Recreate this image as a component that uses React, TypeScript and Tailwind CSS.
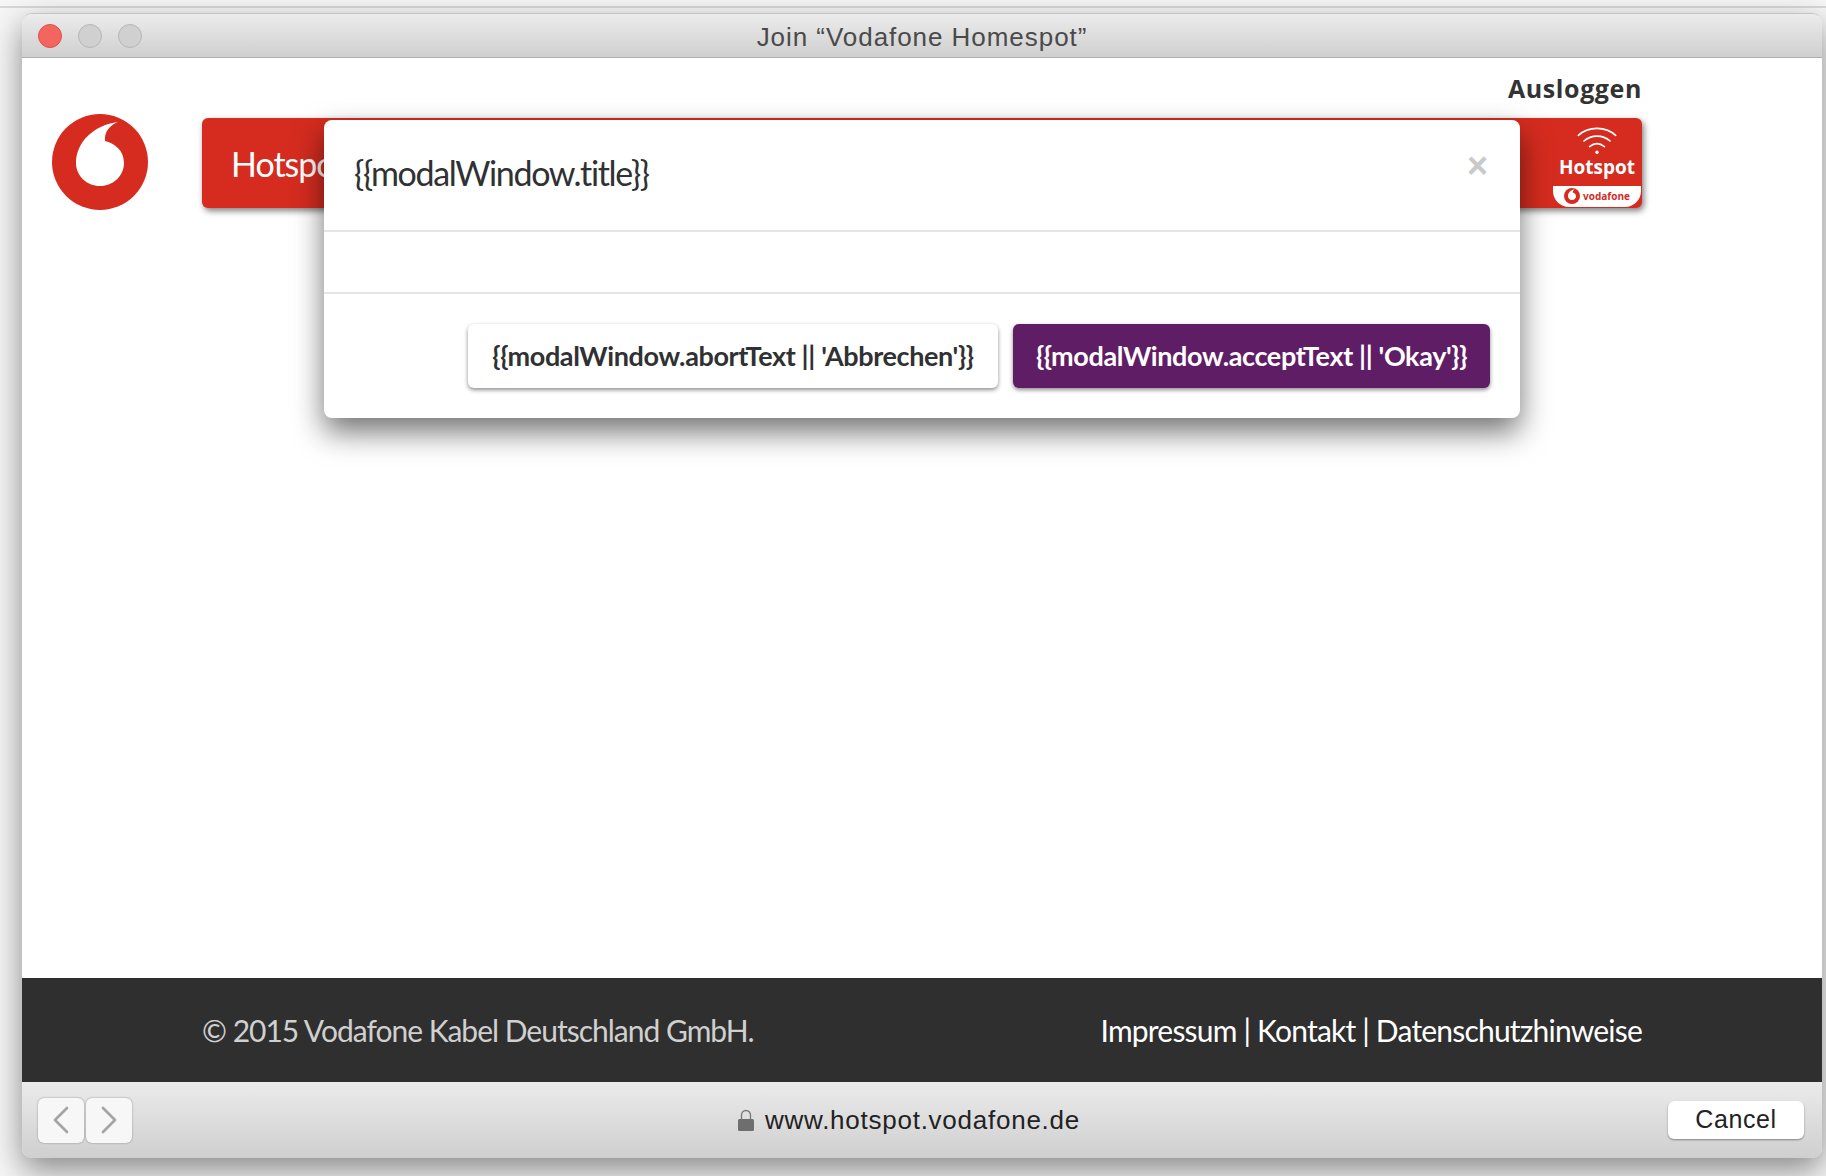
import { ChevronLeft, ChevronRight } from "lucide-react";

function VodafoneMark({ className }: { className?: string }) {
  return (
    <svg viewBox="0 0 96 96" className={className}>
      <circle cx="48" cy="48" r="48" fill="#d52c1f" />
      <path
        d="M66 8C42 11 24 28 24 49C24 62 35 72 48 72C61 72 72 62 72 49C72 36 62 29 53 27C52 18 58 11 66 8Z"
        fill="#fff"
      />
    </svg>
  );
}

function HotspotBadge() {
  return (
    <div className="flex h-full w-[90px] flex-col items-center">
      <svg viewBox="0 0 44 30" className="mt-[9px] h-[28px] w-[42px]" fill="none" stroke="#fff" strokeWidth="1.7" strokeLinecap="round">
        <path d="M2 9C13 -1 31 -1 42 9" />
        <path d="M8 15C16 8 28 8 36 15" />
        <path d="M14 21C19 17 25 17 30 21" />
        <circle cx="22" cy="27" r="1.8" fill="#fff" stroke="none" />
      </svg>
      <span className="text-[19px] leading-[24px] font-bold text-white [font-family:'Open_Sans',sans-serif]">Hotspot</span>
      <div className="mt-[7px] flex h-[21px] w-[88px] items-center justify-center gap-[3px] rounded-b-[16px] bg-white pb-[2px]">
        <VodafoneMark className="h-[16px] w-[16px]" />
        <span className="text-[10px] leading-none font-bold text-[#d52c1f] [font-family:'Open_Sans',sans-serif]">vodafone</span>
      </div>
    </div>
  );
}

function ModalWindow() {
  return (
    <div className="absolute top-[62px] left-[302px] flex h-[298px] w-[1196px] flex-col rounded-[8px] bg-white shadow-[0_14px_30px_rgba(0,0,0,0.55)] [font-family:'Lato',sans-serif]">
      <div className="flex h-[112px] items-start justify-between border-b-2 border-[#e5e5e5] pt-[28px] pr-[32px] pl-[30px]">
        <h4 className="text-[34px] leading-[50px] tracking-[-1.35px] text-[#2f3133]">{"{{modalWindow.title}}"}</h4>
        <span className="text-[36px] leading-[36px] font-bold text-[#c9c9c9] [font-family:'Liberation_Sans',sans-serif]">×</span>
      </div>
      <div className="h-[62px] border-b-2 border-[#e5e5e5]" />
      <div className="flex flex-1 items-start justify-end gap-[15px] pt-[30px] pr-[30px]">
        <button className="h-[64px] w-[530px] rounded-[6px] bg-white text-[27px] font-bold tracking-[-0.37px] text-[#2f3133] shadow-[0_2px_4px_rgba(0,0,0,0.45)]">
          {"{{modalWindow.abortText || 'Abbrechen'}}"}
        </button>
        <button className="h-[64px] w-[477px] rounded-[6px] bg-[#5f1d66] text-[27px] font-bold tracking-[-0.37px] text-white shadow-[0_2px_4px_rgba(0,0,0,0.45)]">
          {"{{modalWindow.acceptText || 'Okay'}}"}
        </button>
      </div>
    </div>
  );
}

export default function App() {
  return (
    <div className="h-[1176px] w-[1826px] overflow-hidden bg-[#f6f6f6] [font-family:'Liberation_Sans',sans-serif]">
      <div className="h-[8px] border-b-2 border-[#d8d8d8]" />
      <div className="mt-[5px] ml-[22px] flex h-[1145px] w-[1800px] flex-col overflow-hidden rounded-[10px] border-t border-[#c4c4c4] bg-white shadow-[0_12px_32px_rgba(0,0,0,0.45)]">
        <div className="relative flex h-[44px] shrink-0 items-center justify-center border-b border-[#aeaeae] bg-gradient-to-b from-[#ececec] to-[#cfcfcf]">
          <div className="absolute top-[10px] left-[16px] flex gap-[16px]">
            <span className="h-[24px] w-[24px] rounded-full border border-[#d9534d] bg-[#f4655f]" />
            <span className="h-[24px] w-[24px] rounded-full border border-[#b5b5b5] bg-[#d0d0d0]" />
            <span className="h-[24px] w-[24px] rounded-full border border-[#b5b5b5] bg-[#d0d0d0]" />
          </div>
          <span className="mt-[3px] text-[26px] tracking-[0.95px] text-[#4a4a4a]">Join “Vodafone Homespot”</span>
        </div>

        <div className="relative flex flex-1 flex-col bg-white">
          <div className="flex h-[56px] justify-end pt-[14px] pr-[180px]">
            <a className="text-[25px] leading-[32px] font-bold tracking-[0.6px] text-[#333] [font-family:'Open_Sans',sans-serif]">Ausloggen</a>
          </div>
          <div className="flex flex-1 items-start pl-[30px]">
            <VodafoneMark className="h-[96px] w-[96px]" />
            <div className="mt-[4px] ml-[54px] flex h-[90px] w-[1440px] items-center justify-between rounded-[6px] bg-[#d52c1f] pl-[29px] shadow-[2px_3px_6px_rgba(0,0,0,0.5)]">
              <span className="text-[34px] tracking-[-1px] text-white [font-family:'Lato',sans-serif]">Hotspot</span>
              <HotspotBadge />
            </div>
          </div>
          <ModalWindow />
          <div className="flex h-[104px] shrink-0 items-center justify-between bg-[#2f2f2f] pr-[180px] pl-[180px] text-[30px] [font-family:'Lato',sans-serif]">
            <span className="tracking-[-1px] text-[#d0d0d0]">© 2015 Vodafone Kabel Deutschland GmbH.</span>
            <span className="tracking-[-0.8px] text-white">Impressum | Kontakt | Datenschutzhinweise</span>
          </div>
        </div>

        <div className="flex h-[76px] shrink-0 items-center justify-between bg-gradient-to-b from-[#ebebeb] to-[#cfcfcf] pr-[18px] pl-[16px]">
          <div className="flex gap-[2px]">
            <button className="flex h-[45px] w-[46px] items-center justify-center rounded-[6px] bg-[#f7f7f7] shadow-[0_0_2px_rgba(0,0,0,0.4)]">
              <ChevronLeft className="h-[48px] w-[48px] shrink-0 text-[#a5a5a5]" strokeWidth={1.4} />
            </button>
            <button className="flex h-[45px] w-[46px] items-center justify-center rounded-[6px] bg-[#f7f7f7] shadow-[0_0_2px_rgba(0,0,0,0.4)]">
              <ChevronRight className="h-[48px] w-[48px] shrink-0 text-[#a5a5a5]" strokeWidth={1.4} />
            </button>
          </div>
          <div className="ml-[18px] flex items-center gap-[11px] text-[26px] tracking-[0.75px] text-[#222]">
            <svg viewBox="0 0 16 22" className="h-[22px] w-[16px]">
              <path d="M3.5 10V6a4.5 4.5 0 0 1 9 0v4" fill="none" stroke="#777" strokeWidth="1.3" />
              <rect x="0" y="10" width="16" height="12" rx="1.5" fill="#6e6e6e" />
            </svg>
            www.hotspot.vodafone.de
          </div>
          <button className="h-[38px] w-[136px] rounded-[6px] bg-white text-[25px] tracking-[0.6px] text-[#222] shadow-[0_1px_2px_rgba(0,0,0,0.4)]">Cancel</button>
        </div>
      </div>
    </div>
  );
}
